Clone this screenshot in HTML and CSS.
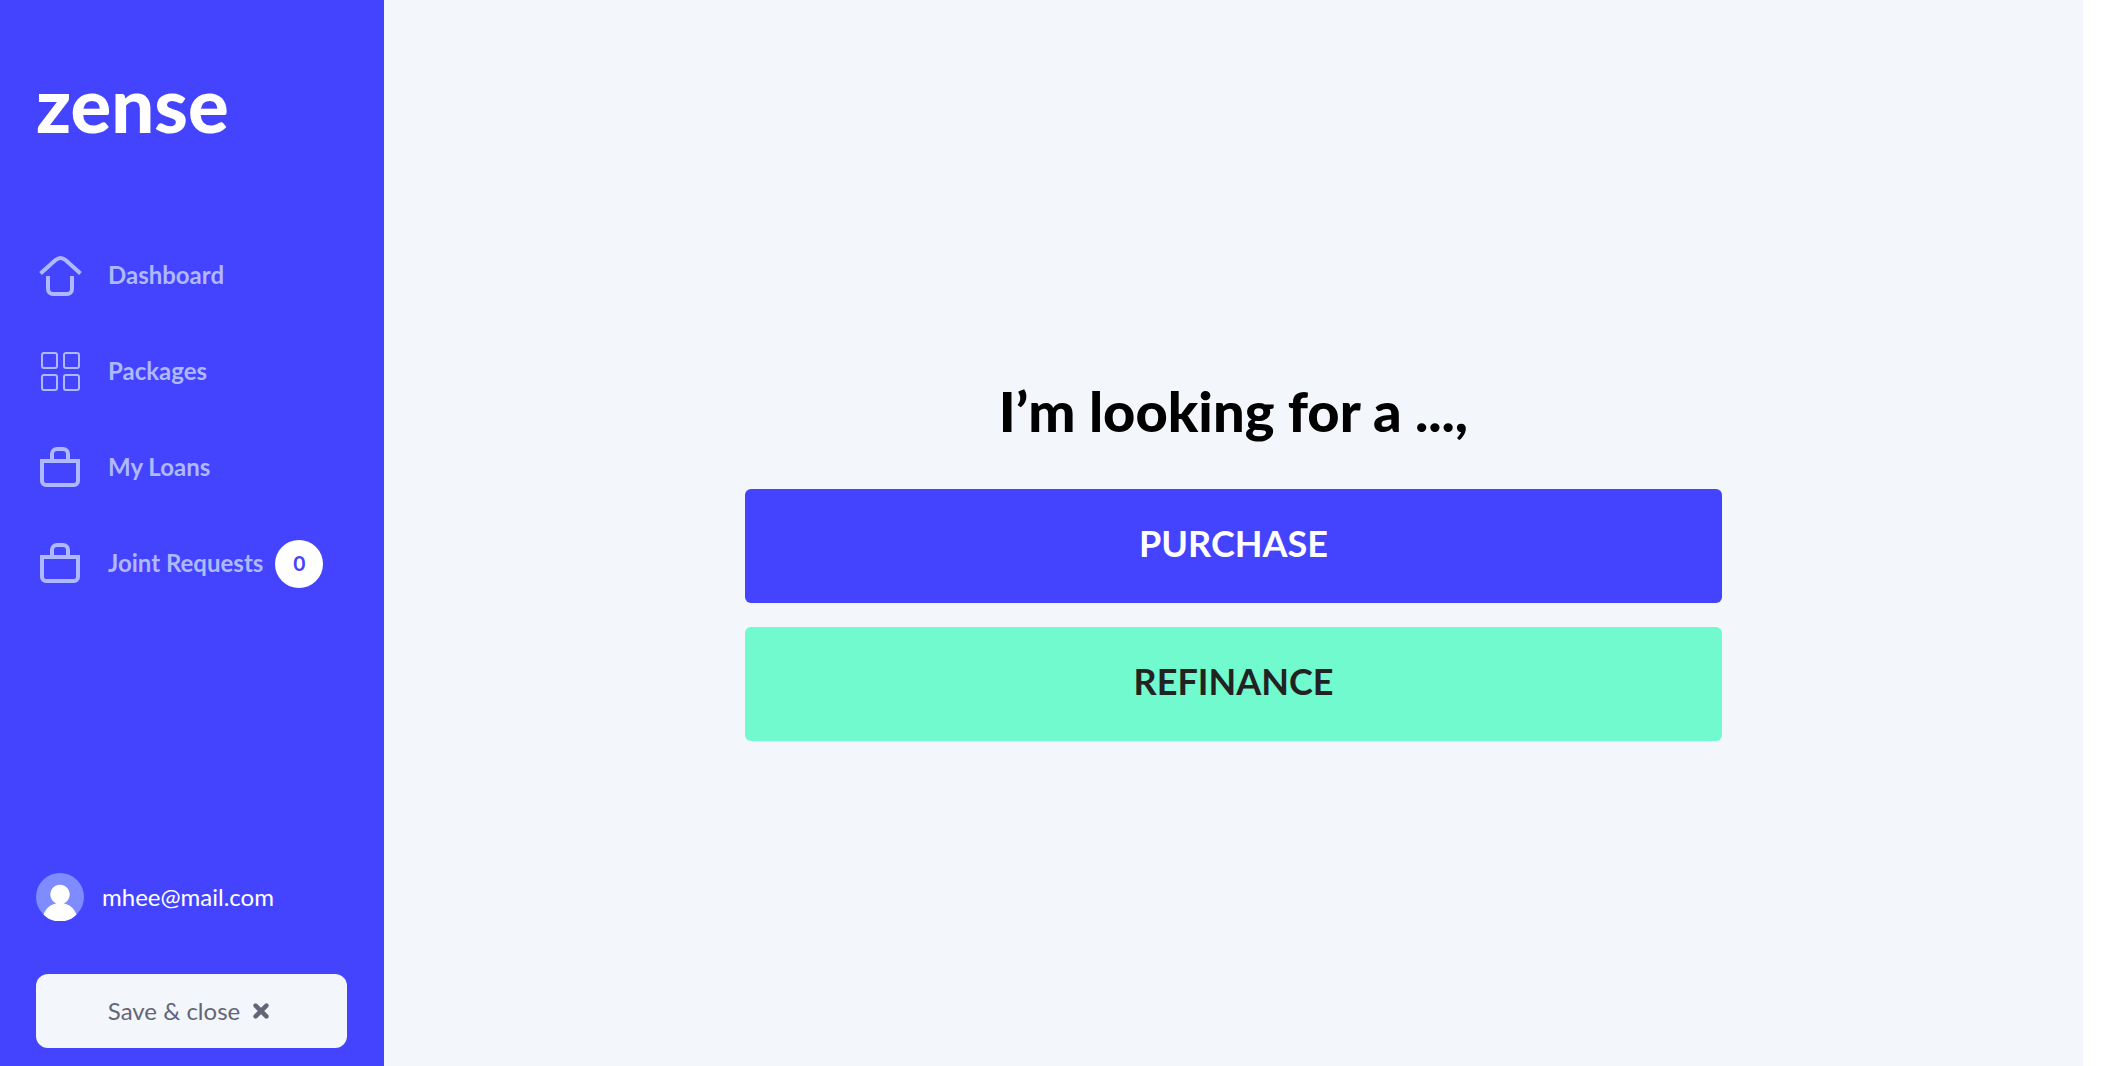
FILE: index.html
```html
<!DOCTYPE html>
<html lang="en">
<head>
<meta charset="utf-8">
<meta name="viewport" content="width=device-width, initial-scale=1">
<title>Zense</title>
<link rel="stylesheet" href="styles.css">
</head>
<body>
<div class="app">
  <aside class="sidebar">
    <a class="logo" href="#">zense</a>
    <nav class="nav" aria-label="Main">
      <a class="nav-link" href="#">
        <svg class="icon" viewBox="0 0 48 48" aria-hidden="true" fill="none" stroke="currentColor" stroke-width="4"><path d="M4.500 21.500 19.500 8Q24.500 4 29.500 8L44.500 21.500M12 24v13a5 5 0 0 0 5 5h14a5 5 0 0 0 5-5V24"/></svg>
        <span class="nav-text">Dashboard</span>
      </a>
      <a class="nav-link" href="#">
        <svg class="icon" viewBox="0 0 48 48" aria-hidden="true" fill="none" stroke="currentColor" stroke-width="2"><rect x="6" y="5" width="15" height="15" rx="2"/><rect x="28" y="5" width="15" height="15" rx="2"/><rect x="6" y="27" width="15" height="15" rx="2"/><rect x="28" y="27" width="15" height="15" rx="2"/></svg>
        <span class="nav-text">Packages</span>
      </a>
      <a class="nav-link" href="#">
        <svg class="icon" viewBox="0 0 48 48" aria-hidden="true" fill="none" stroke="currentColor" stroke-width="4"><path d="M6 17h36v20a4 4 0 0 1-4 4H10a4 4 0 0 1-4-4zM16 17v-7a5 5 0 0 1 5-5h6a5 5 0 0 1 5 5v7"/></svg>
        <span class="nav-text">My Loans</span>
      </a>
      <a class="nav-link" href="#">
        <svg class="icon" viewBox="0 0 48 48" aria-hidden="true" fill="none" stroke="currentColor" stroke-width="4"><path d="M6 17h36v20a4 4 0 0 1-4 4H10a4 4 0 0 1-4-4zM16 17v-7a5 5 0 0 1 5-5h6a5 5 0 0 1 5 5v7"/></svg>
        <span class="nav-text">Joint Requests</span>
        <span class="badge">0</span>
      </a>
    </nav>
    <div class="user">
      <svg class="icon" viewBox="0 0 48 48" aria-hidden="true"><circle cx="24" cy="24" r="24" fill="#7f8cff"/><path d="M24 48.500c-6.500 0-12.500-2.500-16.500-7C10 34.500 16 31 20.500 30.500a9.700 9.700 0 1 1 7 0C32 31 38 34.500 40.500 41.500c-4 4.500-10 7-16.500 7z" fill="#fff"/></svg>
      <span>mhee@mail.com</span>
    </div>
    <button class="save" type="button">
      Save &amp; close
      <svg class="close" viewBox="0 0 20 20" aria-hidden="true" fill="none" stroke="currentColor" stroke-width="5" stroke-linecap="round"><path d="m4 4 12 12M16 4 4 16"/></svg>
    </button>
  </aside>
  <main class="main">
    <section class="panel">
      <h1 class="title">I’m looking for a ...,</h1>
      <button class="choice choice-purchase" type="button">PURCHASE</button>
      <button class="choice choice-refinance" type="button">REFINANCE</button>
    </section>
  </main>
</div>
</body>
</html>
```
FILE: styles.css
```css
* {
  box-sizing: border-box;
}

body {
  margin: 0;
  background: #fff;
  font-family: Lato, "Liberation Sans", sans-serif;
  font-size: 24px;
  line-height: 36px;
}

button {
  border: 0;
  font: inherit;
  cursor: pointer;
}

a {
  color: inherit;
  text-decoration: none;
}

.app {
  display: flex;
  min-height: 100vh;
  margin-right: 29px;
  background: #f3f6fb;
}

.sidebar {
  display: flex;
  flex-direction: column;
  flex: 0 0 384px;
  padding: 68px 37px 18px 36px;
  background: #4444ff;
  color: #fff;
}

.logo {
  font-size: 76px;
  font-weight: 900;
  line-height: 72px;
}

.nav {
  display: flex;
  flex-direction: column;
  gap: 48px;
  margin: 112px 0 48px;
  color: #afb9ff;
  font-weight: 700;
}

.nav-link {
  display: flex;
  align-items: center;
  height: 48px;
  white-space: nowrap;
}

.nav-text {
  padding: 0 12px 3px 24px;
}

.icon {
  flex: none;
  width: 48px;
  height: 48px;
}

.badge {
  width: 48px;
  height: 48px;
  border-radius: 50%;
  background: #fff;
  color: #4444ff;
  font-size: 21px;
  line-height: 45px;
  text-align: center;
}

.user {
  display: flex;
  align-items: center;
  gap: 18px;
  margin-top: auto;
}

.save {
  display: flex;
  align-items: center;
  justify-content: center;
  gap: 12px;
  margin-top: 53px;
  padding: 19px 24px 19px 19px;
  border-radius: 12px;
  background: #f3f6fb;
  color: #646675;
}

.close {
  width: 18px;
  height: 18px;
}

.main {
  display: flex;
  flex: 1;
  align-items: center;
  justify-content: center;
}

.panel {
  display: flex;
  flex-direction: column;
  gap: 24px;
  width: 57.5%;
  padding-top: 56px;
}

.title {
  margin: 0 0 24px;
  color: #000;
  font-size: 56px;
  font-weight: 900;
  line-height: 60px;
  text-align: center;
}

.choice {
  padding: 27px 30px 33px;
  border-radius: 6px;
  font-size: 36px;
  font-weight: 700;
  line-height: 54px;
}

.choice-purchase {
  background: #4444ff;
  color: #fff;
}

.choice-refinance {
  background: #70facd;
  color: #222;
}
```
